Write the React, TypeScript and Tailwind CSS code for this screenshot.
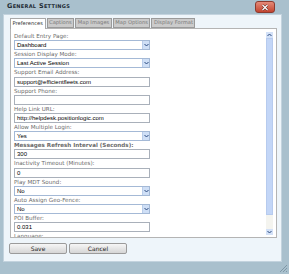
import React from "react";

const label = "font-['DejaVu_Sans',sans-serif] text-[5.6px] leading-[8.2px] h-[8.2px] text-[#6b6b6b] whitespace-nowrap";
const valueText = "font-['Liberation_Sans',Arial,sans-serif] text-[6px] text-black leading-none whitespace-nowrap";

type Row = { label: string; kind: "select" | "input" | "none"; value: string; bold?: boolean };

const rows: Row[] = [
  { label: "Default Entry Page:", kind: "select", value: "Dashboard" },
  { label: "Session Display Mode:", kind: "select", value: "Last Active Session" },
  { label: "Support Email Address:", kind: "input", value: "support@efficientfleets.com" },
  { label: "Support Phone:", kind: "input", value: "" },
  { label: "Help Link URL:", kind: "input", value: "http://helpdesk.positionlogic.com" },
  { label: "Allow Multiple Login:", kind: "select", value: "Yes" },
  { label: "Messages Refresh Interval (Seconds):", kind: "input", value: "300", bold: true },
  { label: "Inactivity Timeout (Minutes):", kind: "input", value: "0" },
  { label: "Play MDT Sound:", kind: "select", value: "No" },
  { label: "Auto Assign Geo-Fence:", kind: "select", value: "No" },
  { label: "POI Buffer:", kind: "input", value: "0.031" },
  // last row is scrolled below the fold, only the top of its label shows
  { label: "Language:", kind: "none", value: "" },
];

const tabs = ["Preferences", "Captions", "Map Images", "Map Options", "Display Format"];

const Chevron = ({ up = false }: { up?: boolean }) => (
  <svg width="5" height="4" viewBox="0 0 5 4">
    <path
      d={up ? "M0.5 3 L2.5 1 L4.5 3" : "M0.5 1 L2.5 3 L4.5 1"}
      fill="none"
      stroke="#2b4a80"
      strokeWidth="1"
    />
  </svg>
);

const Field = ({ row }: { row: Row }) => {
  if (row.kind === "none") return null;
  if (row.kind === "select") {
    return (
      <div className="flex h-[10px] w-[136px] items-center border border-[#a4b9d6] bg-white">
        <span className={`${valueText} flex-1 pl-[2px]`}>{row.value}</span>
        <div className="flex h-full w-[7px] items-center justify-center border-l border-[#b9cdea] bg-[#cfdff6]">
          <Chevron />
        </div>
      </div>
    );
  }
  return (
    <div className="flex h-[10px] w-[136px] items-center border border-[#a9b0ba] bg-white">
      <span className={`${valueText} pl-[2px]`}>{row.value}</span>
    </div>
  );
};

export default function App() {
  return (
    <div className="flex h-[274px] w-[289px] flex-col bg-[#a9c0cd]">
      <div className="flex h-[14px] items-center justify-between pl-[7px] pr-[14px]">
        <span className="font-['DejaVu_Sans',sans-serif] text-[6.5px] font-bold text-[#1d2a33] [font-variant:small-caps] tracking-[0.3px]">
          General Settings
        </span>
        <div className="flex h-[12px] w-[20px] items-center justify-center self-start mt-[1px] rounded-[3px] border border-[#8c3a2e] bg-gradient-to-b from-[#e58a78] to-[#c2432f]">
          <svg width="8" height="7" viewBox="0 0 8 7">
            <path d="M1.5 1 L6.5 6 M6.5 1 L1.5 6" stroke="#5a1e14" strokeWidth="2.4" />
            <path d="M1.5 1 L6.5 6 M6.5 1 L1.5 6" stroke="#ffffff" strokeWidth="1.3" />
          </svg>
        </div>
      </div>

      <div className="ml-[3px] flex h-[248px] w-[279px] flex-col border border-[#c3d3de] bg-[#eef5fa]">
        <div className="flex h-[13px] items-end gap-[1px] pl-[6px]">
          {tabs.map((t, i) => (
            <div
              key={t}
              className={
                i === 0
                  ? "relative z-10 -mb-px flex h-[11px] items-center border border-b-0 border-[#a8a8a8] bg-white px-[1.5px] font-['DejaVu_Sans',sans-serif] text-[5.2px] leading-none text-[#333]"
                  : "flex h-[10px] items-center border border-[#9a9a9a] bg-[#cbcbcb] px-[1.5px] font-['DejaVu_Sans',sans-serif] text-[5.2px] leading-none text-[#7a7a7a]"
              }
            >
              {t}
            </div>
          ))}
        </div>

        <div className="ml-[6px] flex h-[210px] w-[267px] border border-[#b4b4b4] bg-white">
          <div className="flex-1 overflow-hidden pl-[3px] pt-[3px]">
            {rows.map((r) => (
              <div key={r.label}>
                <div className={r.bold ? `${label} font-bold text-[#2a2a2a]` : label}>{r.label}</div>
                <Field row={r} />
              </div>
            ))}
          </div>
          <div className="mr-[3px] mt-[3px] mb-[2px] flex w-[7px] flex-col bg-[#f4f4ef]">
            <div className="flex h-[6px] items-center justify-center bg-[#d3e1f7]">
              <Chevron up />
            </div>
            <div className="h-[177px] border border-[#b7cbee] bg-[#c3d6f7]" />
            <div className="flex-1" />
            <div className="flex h-[6px] items-center justify-center bg-[#d3e1f7]">
              <Chevron />
            </div>
          </div>
        </div>

        <div className="mt-[5px] flex gap-[2px] pl-[5px]">
          {["Save", "Cancel"].map((b) => (
            <div
              key={b}
              className="flex h-[11px] w-[58px] items-center justify-center rounded-[2px] border border-[#9b9b9b] bg-gradient-to-b from-[#f6f6f6] to-[#d6d6d6] font-['DejaVu_Sans',sans-serif] text-[6px] leading-none text-[#222]"
            >
              {b}
            </div>
          ))}
        </div>
      </div>

      <div className="flex flex-1 items-end justify-end pr-[1px] pb-[1px]">
        <svg width="10" height="10" viewBox="0 0 10 10">
          <path d="M9 2 L2 9 M9 5 L5 9 M9 8 L8 9" stroke="#7f97a6" strokeWidth="1" />
        </svg>
      </div>
    </div>
  );
}
